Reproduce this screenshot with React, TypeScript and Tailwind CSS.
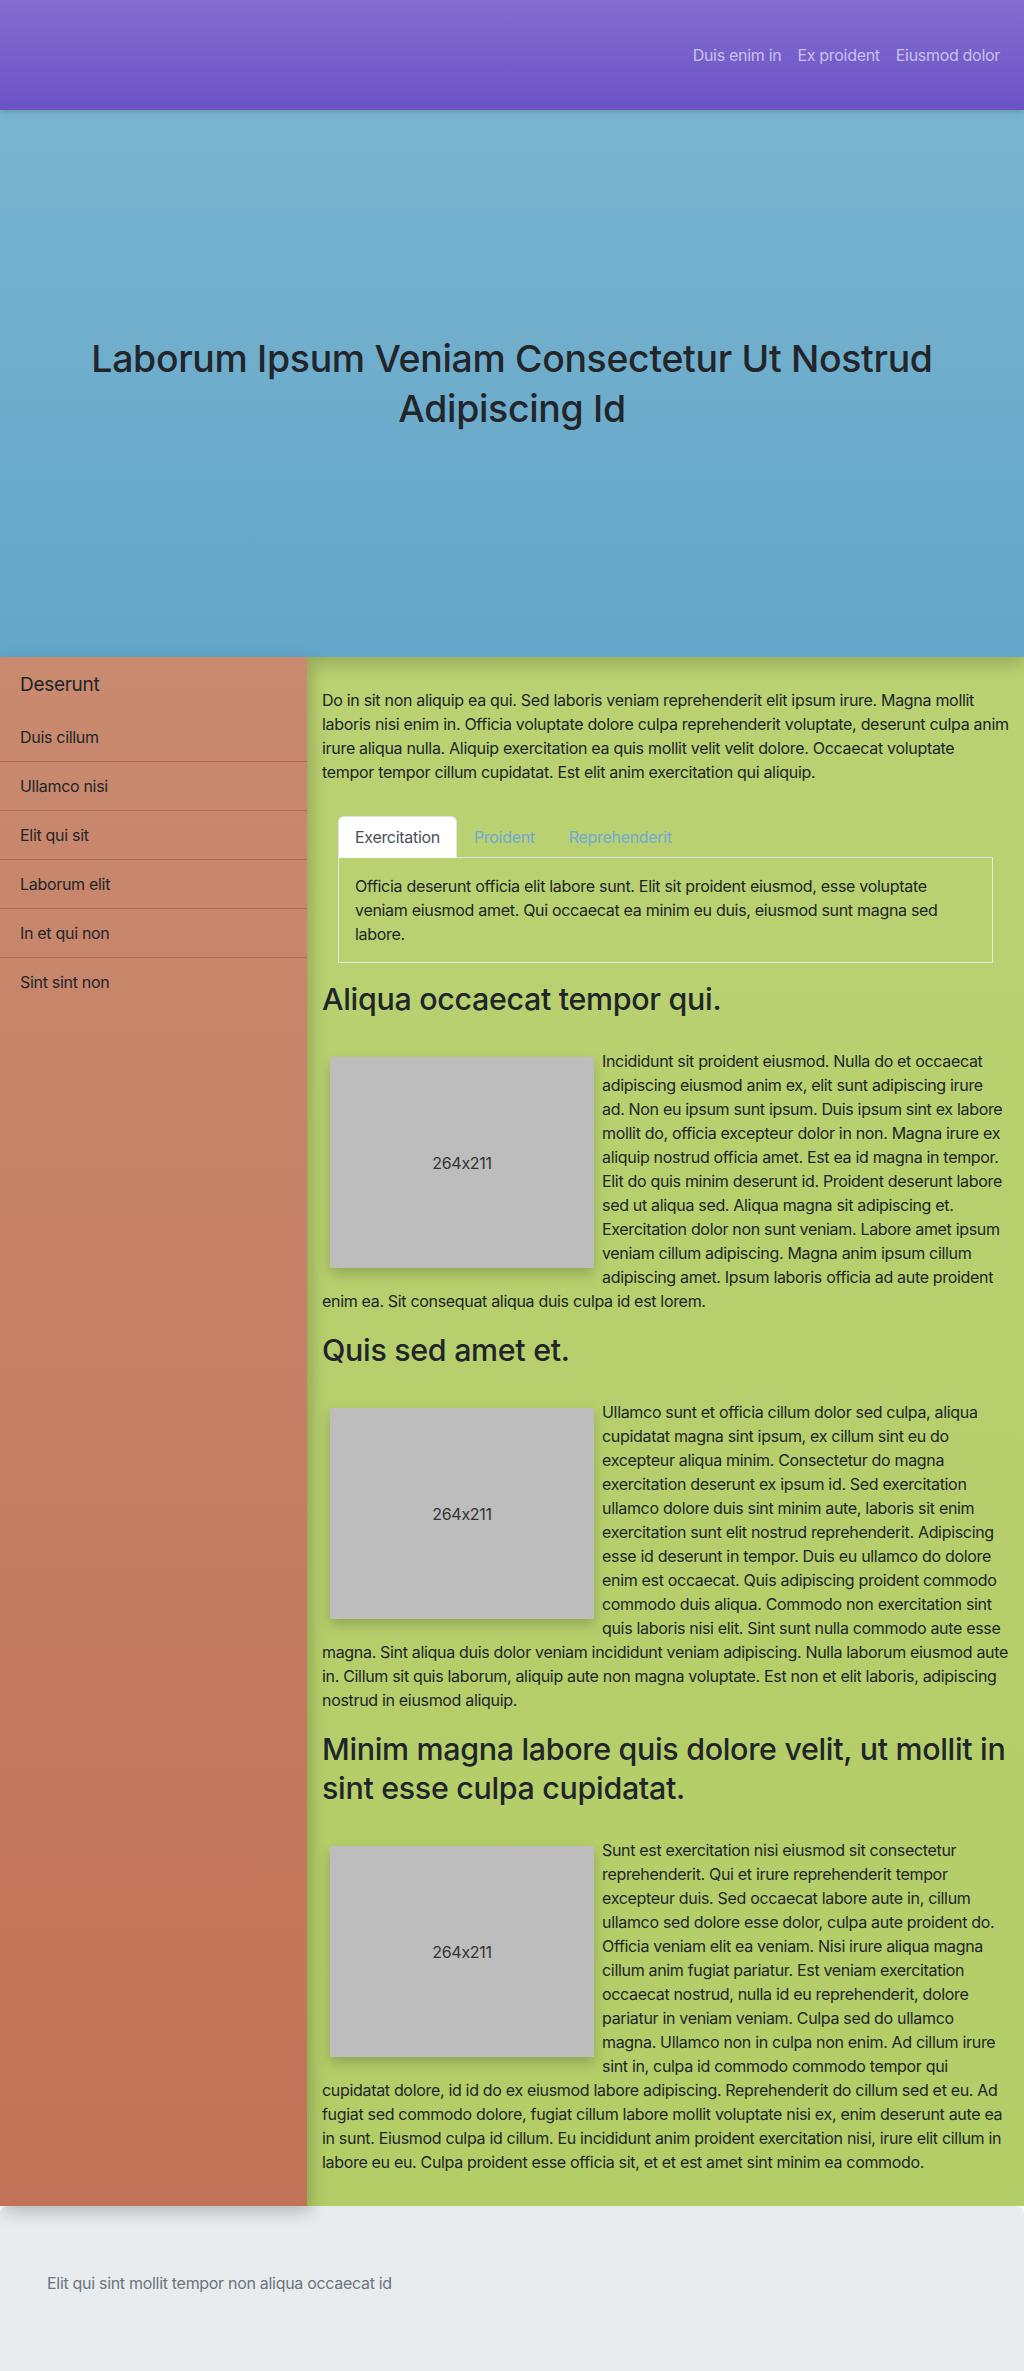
import React from 'react';

const NAV_LINKS = ['Duis enim in', 'Ex proident', 'Eiusmod dolor'];

const SIDE_LINKS = ['Duis cillum', 'Ullamco nisi', 'Elit qui sit', 'Laborum elit', 'In et qui non', 'Sint sint non'];

const TABS = ['Exercitation', 'Proident', 'Reprehenderit'];

interface Section {
    title: string;
    body: string;
}

const SECTIONS: Section[] = [
    {
        title: 'Aliqua occaecat tempor qui.',
        body: 'Incididunt sit proident eiusmod. Nulla do et occaecat adipiscing eiusmod anim ex, elit sunt adipiscing irure ad. Non eu ipsum sunt ipsum. Duis ipsum sint ex labore mollit do, officia excepteur dolor in non. Magna irure ex aliquip nostrud officia amet. Est ea id magna in tempor. Elit do quis minim deserunt id. Proident deserunt labore sed ut aliqua sed. Aliqua magna sit adipiscing et. Exercitation dolor non sunt veniam. Labore amet ipsum veniam cillum adipiscing. Magna anim ipsum cillum adipiscing amet. Ipsum laboris officia ad aute proident enim ea. Sit consequat aliqua duis culpa id est lorem.',
    },
    {
        title: 'Quis sed amet et.',
        body: 'Ullamco sunt et officia cillum dolor sed culpa, aliqua cupidatat magna sint ipsum, ex cillum sint eu do excepteur aliqua minim. Consectetur do magna exercitation deserunt ex ipsum id. Sed exercitation ullamco dolore duis sint minim aute, laboris sit enim exercitation sunt elit nostrud reprehenderit. Adipiscing esse id deserunt in tempor. Duis eu ullamco do dolore enim est occaecat. Quis adipiscing proident commodo commodo duis aliqua. Commodo non exercitation sint quis laboris nisi elit. Sint sunt nulla commodo aute esse magna. Sint aliqua duis dolor veniam incididunt veniam adipiscing. Nulla laborum eiusmod aute in. Cillum sit quis laborum, aliquip aute non magna voluptate. Est non et elit laboris, adipiscing nostrud in eiusmod aliquip.',
    },
    {
        title: 'Minim magna labore quis dolore velit, ut mollit in sint esse culpa cupidatat.',
        body: 'Sunt est exercitation nisi eiusmod sit consectetur reprehenderit. Qui et irure reprehenderit tempor excepteur duis. Sed occaecat labore aute in, cillum ullamco sed dolore esse dolor, culpa aute proident do. Officia veniam elit ea veniam. Nisi irure aliqua magna cillum anim fugiat pariatur. Est veniam exercitation occaecat nostrud, nulla id eu reprehenderit, dolore pariatur in veniam veniam. Culpa sed do ullamco magna. Ullamco non in culpa non enim. Ad cillum irure sint in, culpa id commodo commodo tempor qui cupidatat dolore, id id do ex eiusmod labore adipiscing. Reprehenderit do cillum sed et eu. Ad fugiat sed commodo dolore, fugiat cillum labore mollit voluptate nisi ex, enim deserunt aute ea in sunt. Eiusmod culpa id cillum. Eu incididunt anim proident exercitation nisi, irure elit cillum in labore eu eu. Culpa proident esse officia sit, et et est amet sint minim ea commodo.',
    },
];

export default function App() {
    return (
        <div className="font-['Inter','Liberation_Sans',sans-serif] [font-feature-settings:'calt'_0] tracking-[-0.019em] text-[#212529] text-base leading-6">
            {/* Navbar */}
            <header className="relative z-20 h-[110px] bg-gradient-to-b from-[#846dd0] to-[#6b52c5] flex items-center justify-end pr-4 shadow-md">
                <nav className="flex">
                    {NAV_LINKS.map(link => (
                        <a key={link} href="#" className="px-2 text-[#c9c0ec]">
                            {link}
                        </a>
                    ))}
                </nav>
            </header>

            {/* Hero */}
            <section className="relative z-10 h-[547px] bg-gradient-to-b from-[#79b4cf] to-[#64a6c9] flex items-center justify-center px-12 shadow-[0_8px_16px_rgba(0,0,0,0.18)]">
                <h1 className="text-[37.4px] leading-[50px] font-medium text-center text-[#22262a] max-w-[900px]">
                    Laborum Ipsum Veniam Consectetur Ut Nostrud Adipiscing Id
                </h1>
            </section>

            {/* Body */}
            <div className="flex">
                <aside className="relative z-10 w-[307px] shrink-0 bg-gradient-to-b from-[#c98a70] to-[#c17357] shadow-[4px_6px_16px_rgba(0,0,0,0.22)]">
                    <h5 className="px-5 py-4 text-[19px] leading-6">Deserunt</h5>
                    <ul>
                        {SIDE_LINKS.map((item, i) => (
                            <li
                                key={item}
                                className={`px-5 py-3 ${i < SIDE_LINKS.length - 1 ? 'border-b border-[#b36a50]' : ''}`}
                            >
                                {item}
                            </li>
                        ))}
                    </ul>
                </aside>

                <main className="flex-1 min-w-0 bg-gradient-to-b from-[#bad272] to-[#b3cd67] px-[15px] pt-[31px] pb-4">
                    <p className="mb-4">
                        Do in sit non aliquip ea qui. Sed laboris veniam reprehenderit elit ipsum irure. Magna mollit laboris nisi enim in. Officia voluptate dolore culpa reprehenderit voluptate, deserunt culpa anim irure aliqua nulla. Aliquip exercitation ea quis mollit velit velit dolore. Occaecat voluptate tempor tempor cillum cupidatat. Est elit anim exercitation qui aliquip.
                    </p>

                    {/* Tabs */}
                    <div className="mx-4 mt-8 mb-[17px]">
                        <div className="flex border-b border-[#dee2e6]">
                            {TABS.map((tab, i) => (
                                <button
                                    key={tab}
                                    className={`px-4 py-2 -mb-px border rounded-t-md ${i === 0
                                        ? 'bg-white text-[#495057] border-[#dee2e6] border-b-white'
                                        : 'border-transparent text-[#72a9d6]'
                                        }`}
                                >
                                    {tab}
                                </button>
                            ))}
                        </div>
                        <div className="border border-t-0 border-[#e6e9e6] p-4">
                            Officia deserunt officia elit labore sunt. Elit sit proident eiusmod, esse voluptate veniam eiusmod amet. Qui occaecat ea minim eu duis, eiusmod sunt magna sed labore.
                        </div>
                    </div>

                    {SECTIONS.map((section, i) => (
                        <div key={i} className="flow-root">
                            <h2 className="text-[30.4px] leading-[39px] font-medium mb-[30px]">{section.title}</h2>
                            <div className="float-left m-2 w-[264px] h-[211px] bg-[#bdbdbd] text-[#333] flex items-center justify-center shadow-[0_6px_12px_rgba(0,0,0,0.2)]">
                                264x211
                            </div>
                            <p className={`tracking-[-0.02em] ${i < SECTIONS.length - 1 ? 'mb-[18px]' : 'mb-4'}`}>
                                {section.body}
                            </p>
                        </div>
                    ))}
                </main>
            </div>

            {/* Footer */}
            <footer className="bg-[#e9ecef] rounded-t-lg h-[166px] pt-[65px] px-[47px] text-[#6c757d]">
                Elit qui sint mollit tempor non aliqua occaecat id
            </footer>
        </div>
    );
}
